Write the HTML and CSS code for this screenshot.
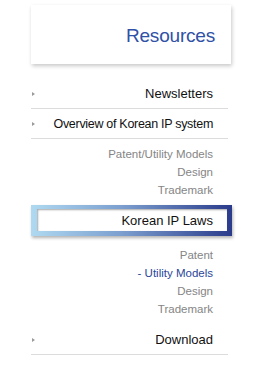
FILE: index.html
```html
<!DOCTYPE html>
<html>

<head>
  <meta charset="utf-8">
  <title>Resources</title>
  <link rel="stylesheet" href="styles.css">
</head>

<body>
  <div class="side-menu">
    <div class="menu-title">
      <h1>Resources</h1>
    </div>
    <ul class="menu-list">
      <li class="menu-item"><span class="arrow"></span><a href="#">Newsletters</a></li>
      <li class="menu-item"><span class="arrow"></span><a href="#" class="tight">Overview of Korean IP system</a></li>
      <li class="sub-list">
        <a href="#">Patent/Utility Models</a>
        <a href="#">Design</a>
        <a href="#">Trademark</a>
      </li>
      <li class="menu-active">
        <div class="active-inner">Korean IP Laws</div>
      </li>
      <li class="sub-list sub-open">
        <a href="#">Patent</a>
        <a href="#" class="current">- Utility Models</a>
        <a href="#">Design</a>
        <a href="#">Trademark</a>
      </li>
      <li class="menu-item"><span class="arrow"></span><a href="#">Download</a></li>
    </ul>
  </div>
</body>

</html>
```

FILE: styles.css
```css
body {
  margin: 0;
  padding: 0;
  background: #fff;
  font-family: 'Liberation Sans', Arial, sans-serif;
}

.side-menu {
  margin-left: 31px;
  padding-top: 5px;
  width: 200px;
}

.menu-title {
  height: 59px;
  background: #fff;
  box-shadow: 1px 2px 4px rgba(0, 0, 0, 0.22);
  display: flex;
  align-items: center;
  justify-content: flex-end;
  padding-right: 16px;
}

.menu-title h1 {
  margin: 3px 0 0 0;
  font-size: 19px;
  font-weight: normal;
  color: #2f51a6;
  letter-spacing: -0.2px;
}

.menu-list {
  list-style: none;
  margin: 15px 0 0 0;
  padding: 0;
  width: 197px;
}

.menu-item {
  height: 29px;
  border-bottom: 1px solid #dcdcdc;
  display: flex;
  align-items: center;
  justify-content: space-between;
  padding-right: 15px;
}

.menu-item a {
  color: #111;
  text-decoration: none;
  font-size: 13px;
}

.menu-item a.tight {
  font-size: 12.5px;
  letter-spacing: -0.3px;
}

.arrow {
  width: 0;
  height: 0;
  margin-left: 1px;
  border-top: 2.5px solid transparent;
  border-bottom: 2.5px solid transparent;
  border-left: 3px solid #9a9a9a;
}

.sub-list {
  display: flex;
  flex-direction: column;
  align-items: flex-end;
  padding: 6px 15px 0 0;
}

.sub-list a {
  line-height: 18px;
  font-size: 11.5px;
  color: #858585;
  text-decoration: none;
}

.sub-list a.current {
  color: #2b4699;
}

.sub-open {
  padding-top: 10px;
  margin-bottom: 7px;
}

.menu-active {
  margin-top: 6px;
  width: 201px;
  height: 31px;
  box-sizing: border-box;
  padding: 4px 5px 5px 6px;
  background: linear-gradient(to right, #afd9f1, #7c9fcf 45%, #2a3b8b);
  box-shadow: 1px 2px 3px rgba(0, 0, 0, 0.3);
}

.active-inner {
  height: 100%;
  background: #fff;
  box-shadow: inset 1px 1px 2px rgba(0, 0, 0, 0.35);
  display: flex;
  align-items: center;
  justify-content: flex-end;
  padding-right: 14px;
  font-size: 13px;
  color: #111;
}
```
